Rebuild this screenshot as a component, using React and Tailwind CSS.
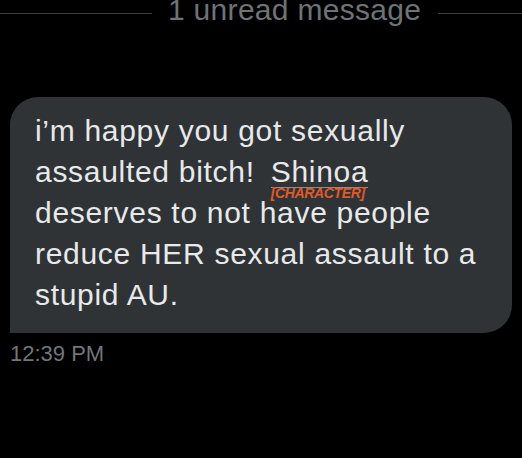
export default function App() {
  return (
    <div className="w-[522px] h-[458px] bg-black overflow-hidden font-['Liberation_Sans',Arial,sans-serif]">
      {/* unread divider */}
      <div className="flex items-center h-[26px]">
        <div className="w-[152px] h-px bg-[#3a3d40]" />
        <span className="ml-4 mr-[17px] text-[30px] text-[#6e7378] leading-none tracking-[0.3px] mb-[6px] whitespace-nowrap">1 unread message</span>
        <div className="flex-1 h-px bg-[#3a3d40]" />
      </div>

      <div className="px-[10px] mt-[71px]">
        {/* bubble */}
        <div className="bg-[#2f3336] rounded-[28px] rounded-bl-none pl-[25px] pr-[14px] pt-[13px] pb-[18px] text-[#e7e9ea] text-[30px] leading-[41px] tracking-[0.7px]">
          <p>
            i’m happy you got sexually
            <br />
            assaulted bitch!{' '}
            <span className="relative inline-block ml-[7px] leading-[31px] border-b border-[#8b9094]">
              Shinoa
              <span className="absolute left-0 top-[30px] text-[14px] leading-none font-bold italic text-[#e05a2a] tracking-tight whitespace-nowrap">
                [CHARACTER]
              </span>
            </span>
            <br />
            deserves to not have people
            <br />
            reduce HER sexual assault to a
            <br />
            stupid AU.
          </p>
        </div>

        <div className="mt-[10px] text-[22px] text-[#71767b] leading-none">12:39 PM</div>
      </div>
    </div>
  )
}
